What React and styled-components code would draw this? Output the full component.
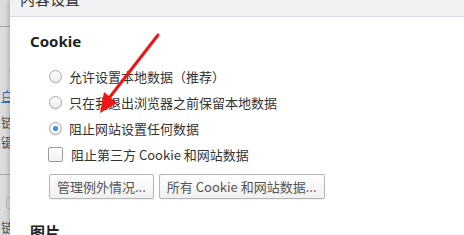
import React from "react";
import styled, { createGlobalStyle } from "styled-components";

const Global = createGlobalStyle`
  html, body { margin: 0; padding: 0; background: #fff; }
  body {
    font-family: "Noto Sans CJK SC", "Noto Sans", sans-serif;
    width: 464px; height: 235px; overflow: hidden;
  }
`;

const Page = styled.div`
  position: relative;
  display: flex;
  width: 464px;
  height: 235px;
  overflow: hidden;
`;

const Backdrop = styled.div`
  width: 10px;
  flex: none;
  background: #dcdcdc;
  overflow: hidden;
  display: flex;
  flex-direction: column;
  align-items: flex-end;
`;

const BackRule = styled.div`
  width: 10px;
  height: 1px;
  background: #a9a9a9;
  margin-top: ${(p) => p.top}px;
`;

const BackChar = styled.span`
  display: block;
  font-size: 13px;
  line-height: 16px;
  margin-top: ${(p) => p.top}px;
  margin-right: -4px;
  color: ${(p) => (p.link ? "#3a6fc4" : "#555")};
  text-decoration: ${(p) => (p.link ? "underline" : "none")};
  white-space: nowrap;
`;

const BackBox = styled.div`
  width: 10px;
  height: 30px;
  margin-top: ${(p) => p.top}px;
  margin-right: -6px;
  border: 1px solid #b9b9b9;
  border-radius: 2px;
  box-sizing: border-box;
`;

const Dialog = styled.div`
  flex: 1;
  background: #fff;
  box-shadow: -2px 0 4px rgba(0, 0, 0, 0.18);
  display: flex;
  flex-direction: column;
`;

const Header = styled.div`
  height: 16px;
  flex: none;
  background: #f1f2f4;
  border-bottom: 1px solid #d5d8dc;
  overflow: hidden;
  padding-left: 10px;
`;

const Title = styled.div`
  margin-top: -12px;
  font-size: 15px;
  line-height: 22px;
  color: #333;
`;

const Body = styled.div`
  padding-left: 20px;
`;

const Heading = styled.h2`
  margin: ${(p) => p.gap}px 0 0;
  font-family: "Noto Sans", "Noto Sans CJK SC", sans-serif;
  font-size: 15px;
  line-height: 20px;
  font-weight: 700;
  color: #222;
`;

const Options = styled.div`
  margin-top: 12px;
  padding-left: 19px;
`;

const Row = styled.label`
  display: flex;
  align-items: center;
  height: 26px;
  gap: 7px;
  font-size: 13px;
  color: #333;
`;

const Radio = styled.span`
  width: 13px;
  height: 13px;
  box-sizing: border-box;
  border-radius: 50%;
  border: 1px solid #a8a8a8;
  background: linear-gradient(#fdfdfd, #ececec);
  box-shadow: 0 1px 1px rgba(0, 0, 0, 0.08);
  display: flex;
  align-items: center;
  justify-content: center;
  &::after {
    content: "";
    width: 5px;
    height: 5px;
    border-radius: 50%;
    background: ${(p) => (p.checked ? "#3d8fe6" : "transparent")};
  }
`;

const Check = styled.span`
  width: 15px;
  height: 15px;
  box-sizing: border-box;
  margin-left: -1px;
  margin-right: 1px;
  border-radius: 2px;
  border: 1px solid #9c9c9c;
  background: linear-gradient(#fff, #f1f1f1);
`;

const Buttons = styled.div`
  display: flex;
  gap: 5px;
  margin-top: 7px;
`;

const Button = styled.button`
  height: 25px;
  padding: 0 7px;
  font-family: "Noto Sans CJK SC", "Noto Sans", sans-serif;
  font-size: 13px;
  color: #555;
  border: 1px solid #b5b5b5;
  border-radius: 2px;
  background: linear-gradient(#fefefe, #f0f0f0);
  box-shadow: 0 1px 1px rgba(0, 0, 0, 0.06);
`;

const Arrow = styled.svg`
  position: absolute;
  left: 0;
  top: 0;
  pointer-events: none;
`;

const options = [
  { text: "允许设置本地数据（推荐）" },
  { text: "只在我退出浏览器之前保留本地数据" },
  { text: "阻止网站设置任何数据", checked: true },
];

export default function App() {
  return (
    <Page>
      <Global />
      <Backdrop>
        <BackRule top={26} />
        <BackChar top={30} link>-</BackChar>
        <BackChar top={16} link>白</BackChar>
        <BackChar top={10}>链</BackChar>
        <BackChar top={4}>键</BackChar>
        <BackRule top={24} />
        <BackBox top={22} />
        <BackChar top={10}>链</BackChar>
      </Backdrop>
      <Dialog>
        <Header>
          <Title>内容设置</Title>
        </Header>
        <Body>
          <Heading gap={14}>Cookie</Heading>
          <Options>
            {options.map((o) => (
              <Row key={o.text}>
                <Radio checked={o.checked} />
                {o.text}
              </Row>
            ))}
            <Row>
              <Check />
              阻止第三方 Cookie 和网站数据
            </Row>
            <Buttons>
              <Button>管理例外情况...</Button>
              <Button>所有 Cookie 和网站数据...</Button>
            </Buttons>
          </Options>
          <Heading gap={23}>图片</Heading>
        </Body>
      </Dialog>
      <Arrow width="464" height="235" viewBox="0 0 464 235">
        <line x1="158" y1="35" x2="106" y2="102" stroke="#f01414" strokeWidth="3" strokeLinecap="round" />
        <polygon points="100,113 104,92 117,103" fill="#f01414" />
      </Arrow>
    </Page>
  );
}
